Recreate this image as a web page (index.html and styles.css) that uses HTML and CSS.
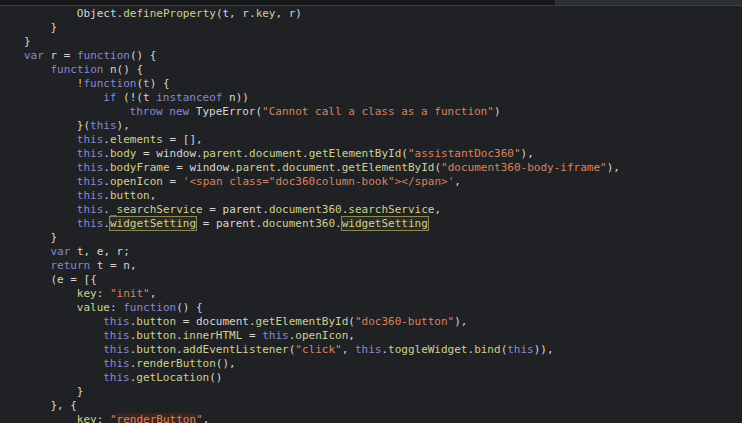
FILE: index.html
```html
<!DOCTYPE html>
<html lang="en">
<head>
    <meta charset="UTF-8">
    <meta name="viewport" content="width=device-width, initial-scale=1.0">
    <title>widget.js</title>
    <link rel="stylesheet" href="styles.css">
</head>
<body>

    <div class="editor">
        <div class="topbar">
            <div class="tab-shadow"></div>
            <div class="scroll-track"></div>
        </div>

        <pre class="code"><div class="ln i2"><span class="pl">Object.</span><span class="pr">defineProperty</span>(t, r.<span class="pr">key</span>, r)</div><div class="ln i1">}</div><div class="ln i0">}</div><div class="ln i0"><span class="kw">var</span> r = <span class="kw">function</span>() {</div><div class="ln i1"><span class="kw">function</span> n() {</div><div class="ln i2"><span class="op">!</span><span class="kw">function</span>(<span class="par">t</span>) {</div><div class="ln i3"><span class="kw">if</span> (!(t <span class="kw">instanceof</span> n))</div><div class="ln i4"><span class="kw">throw</span> <span class="kw">new</span> TypeError(<span class="str">"Cannot call a class as a function"</span>)</div><div class="ln i2">}(<span class="kw">this</span>),</div><div class="ln i2"><span class="kw">this</span>.<span class="pr">elements</span> = [],</div><div class="ln i2"><span class="kw">this</span>.<span class="pr">body</span> = window.<span class="pr">parent</span>.<span class="pr">document</span>.<span class="pr">getElementById</span>(<span class="str">"assistantDoc360"</span>),</div><div class="ln i2"><span class="kw">this</span>.<span class="pr">bodyFrame</span> = window.<span class="pr">parent</span>.<span class="pr">document</span>.<span class="pr">getElementById</span>(<span class="str">"document360-body-iframe"</span>),</div><div class="ln i2"><span class="kw">this</span>.<span class="pr">openIcon</span> = <span class="str">'&lt;span class="doc360column-book"&gt;&lt;/span&gt;'</span>,</div><div class="ln i2"><span class="kw">this</span>.<span class="pr">button</span>,</div><div class="ln i2"><span class="kw">this</span>.<span class="pr">_searchService</span> = parent.<span class="pr">document360</span>.<span class="pr">searchService</span>,</div><div class="ln i2"><span class="kw">this</span>.<span class="pr match">widgetSetting</span> = parent.<span class="pr">document360</span>.<span class="pr match">widgetSetting</span></div><div class="ln i1">}</div><div class="ln i1"><span class="kw">var</span> t, e, r;</div><div class="ln i1"><span class="kw">return</span> t = n,</div><div class="ln i1">(e = [{</div><div class="ln i2"><span class="pr">key</span>: <span class="str">"init"</span>,</div><div class="ln i2"><span class="pr">value</span>: <span class="kw">function</span>() {</div><div class="ln i3"><span class="kw">this</span>.<span class="pr">button</span> = document.<span class="pr">getElementById</span>(<span class="str">"doc360-button"</span>),</div><div class="ln i3"><span class="kw">this</span>.<span class="pr">button</span>.<span class="pr">innerHTML</span> = <span class="kw">this</span>.<span class="pr">openIcon</span>,</div><div class="ln i3"><span class="kw">this</span>.<span class="pr">button</span>.<span class="pr">addEventListener</span>(<span class="str">"click"</span>, <span class="kw">this</span>.<span class="pr">toggleWidget</span>.<span class="pr">bind</span>(<span class="kw">this</span>)),</div><div class="ln i3"><span class="kw">this</span>.<span class="pr">renderButton</span>(),</div><div class="ln i3"><span class="kw">this</span>.<span class="pr">getLocation</span>()</div><div class="ln i2">}</div><div class="ln i1">}, {</div><div class="ln i2"><span class="pr">key</span>: <span class="str">"<span class="found">renderButton</span>"</span>,</div></pre>
    </div>

</body>
</html>
```

FILE: styles.css
```css
body {
    margin: 0;
    padding: 0;
    background-color: #1f2124;
    overflow: hidden;
}

.editor {
    width: 742px;
    height: 423px;
    background: #1f2124;
    overflow: hidden;
}

.topbar {
    display: flex;
    height: 5px;
    border-bottom: 1px solid #3b3e42;
    margin-bottom: 1px;
}

.tab-shadow {
    width: 555px;
    background: #17181a;
}

.scroll-track {
    flex-grow: 1;
    background: #2d3034;
}

.code {
    margin: 0;
    padding: 0 0 0 24px;
    font-family: "DejaVu Sans Mono", "Liberation Mono", monospace;
    font-size: 11px;
    line-height: 14px;
    color: #d6d6d6;
}

.ln {
    height: 14px;
    white-space: pre;
}

.i0 { padding-left: 0; }
.i1 { padding-left: 26.4px; }
.i2 { padding-left: 52.8px; }
.i3 { padding-left: 79.2px; }
.i4 { padding-left: 105.6px; }

.kw { color: #8888d2; }
.pr { color: #d0d090; }
.str { color: #d9845f; }
.op { color: #d8c860; }
.par { color: #a9c1d8; }
.pl { color: #d6d6d6; }

.match {
    outline: 1px solid #8a8a52;
    background: #2a2b24;
}

.found {
    background: #3d2420;
}
```
